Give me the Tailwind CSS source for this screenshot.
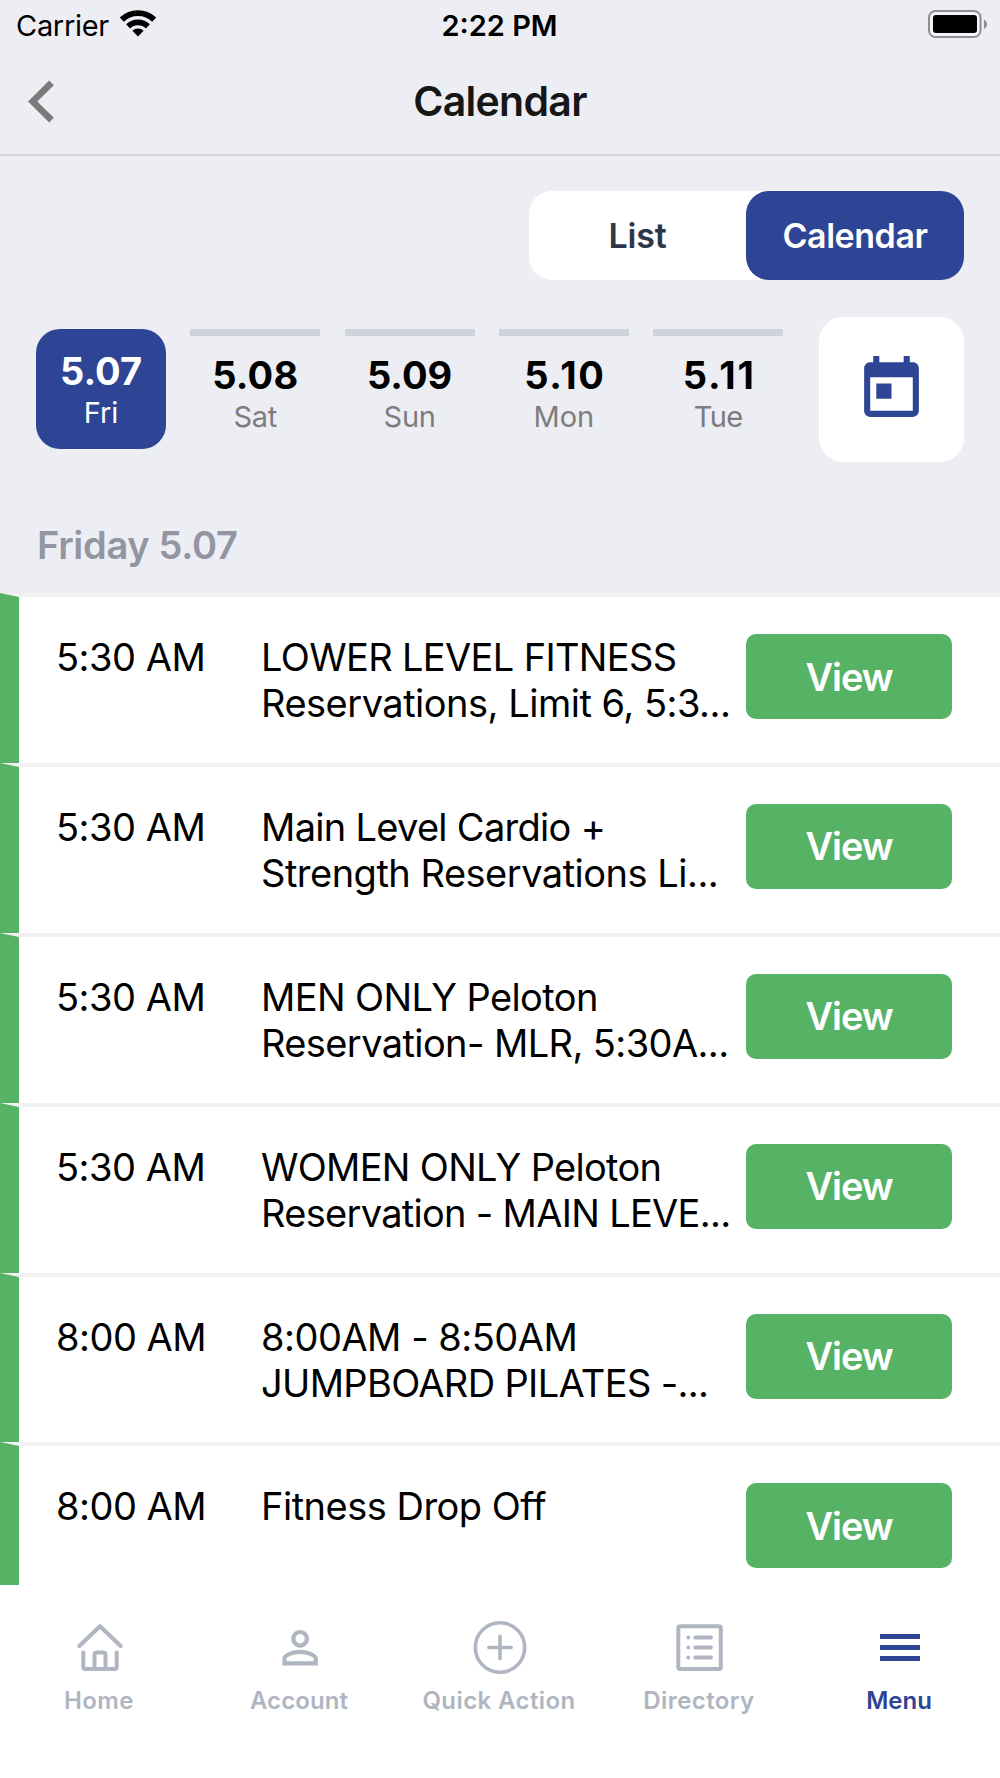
<!DOCTYPE html>
<html lang="en">

<head>
  <meta charset="UTF-8" />
  <meta name="viewport" content="width=device-width, initial-scale=1.0" />
  <title>Calendar</title>
  <script src="https://cdn.jsdelivr.net/npm/@tailwindcss/browser@4"></script>
</head>

<body class="h-[1778px] w-[1000px] overflow-hidden flex flex-col bg-[#edeef3] font-['Inter',sans-serif] text-black">

  <!-- Header -->
  <header class="h-[156px] shrink-0 border-b-2 border-[#d3d4d8]">
    <div class="grid grid-cols-3 items-center h-[51px] pl-4 pr-[13px] text-[29px]">
      <div class="flex items-center gap-[11px]">
        <span class="tracking-[-0.3px]">Carrier</span>
        <svg class="w-9 h-[27px] -mt-1" viewBox="0 0 36 27" fill="none" stroke="#000">
          <path d="M1.8 9.7A23.3 23.3 0 0 1 34.2 9.7" stroke-width="5.9" />
          <path d="M8.1 16.3A14.2 14.2 0 0 1 27.9 16.3" stroke-width="5.8" />
          <path d="M18 26.5L12.4 20.7A8 8 0 0 1 23.6 20.7Z" fill="#000" stroke="none" />
        </svg>
      </div>
      <span class="text-center font-semibold pr-1">2:22 PM</span>
      <svg class="w-[59px] h-7 justify-self-end -mt-[3px]" viewBox="0 0 59 28">
        <rect x="1" y="1" width="51.5" height="26" rx="6.5" fill="#f4f4f7" stroke="#8f8f92" stroke-width="2" />
        <rect x="5" y="5" width="44" height="18" rx="3" />
        <path d="M56 9.5c4 2 4 7.5 0 9.5z" fill="#8f8f92" />
      </svg>
    </div>
    <div class="grid grid-cols-3 items-center h-[101px] px-7">
      <svg class="w-[27px] h-[43px]" viewBox="0 0 27 43" fill="none" stroke="#7a7a7a" stroke-width="6.6">
        <path d="M23.500 2.800L4.700 21.500L23.500 40.200" />
      </svg>
      <h1 class="text-center text-[41px] leading-[50px] font-semibold tracking-[-0.7px] text-[#161616] pb-px">Calendar</h1>
    </div>
  </header>

  <!-- List / Calendar toggle -->
  <div class="flex shrink-0 justify-end pt-[35px] pr-9">
    <div class="flex w-[435px] h-[89px] rounded-[23px] bg-white text-[34px] font-semibold">
      <button class="flex-1 text-[#2d3748] tracking-[-0.2px]">List</button>
      <button class="w-[218px] rounded-[23px] bg-[#2e4494] text-white tracking-[-0.45px]">Calendar</button>
    </div>
  </div>

  <!-- Days -->
  <div class="flex shrink-0 items-center justify-between mt-[37px] px-9 h-[145px]">
    <div class="flex gap-[24.3px] h-[121px] text-center text-[29px] leading-[37px] text-[#7d7d7d]">
      <div class="w-[130px] h-[120px] pt-[19px] rounded-3xl bg-[#2e4494] text-white">
        <p class="text-[38px] leading-[46px] font-bold">5.07</p>
        <p>Fri</p>
      </div>
      <div class="w-[130px] border-t-7 border-[#cfd4dc] pt-4">
        <p class="text-[38px] leading-[46px] font-bold text-black tracking-[0.2px]">5.08</p>
        <p class="tracking-[-0.3px]">Sat</p>
      </div>
      <div class="w-[130px] border-t-7 border-[#cfd4dc] pt-4">
        <p class="text-[38px] leading-[46px] font-bold text-black">5.09</p>
        <p class="tracking-[-0.3px]">Sun</p>
      </div>
      <div class="w-[130px] border-t-7 border-[#cfd4dc] pt-4">
        <p class="text-[38px] leading-[46px] font-bold text-black tracking-[1.6px] pl-0.5">5.10</p>
        <p>Mon</p>
      </div>
      <div class="w-[130px] border-t-7 border-[#cfd4dc] pt-4">
        <p class="text-[38px] leading-[46px] font-bold text-black tracking-[1.9px] pl-0.5">5.11</p>
        <p class="tracking-[-0.6px]">Tue</p>
      </div>
    </div>
    <button class="flex items-center justify-center size-[145px] rounded-3xl bg-white">
      <svg class="size-[73px]" viewBox="0 0 24 24" fill="#2e4494">
        <path d="M19 3h-1V1h-2v2H8V1H6v2H5c-1.11 0-1.99.9-1.99 2L3 19c0 1.1.89 2 2 2h14c1.1 0 2-.9 2-2V5c0-1.1-.9-2-2-2zm0 16H5V8h14v11zM7 10h5v5H7z" />
      </svg>
    </button>
  </div>

  <h2 class="shrink-0 mt-[60px] mb-[25px] pl-[37px] text-[38px] leading-[46px] font-semibold tracking-[-0.3px] text-[#9395a3]">Friday 5.07</h2>

  <!-- Events -->
  <main class="h-[992px] shrink-0 overflow-hidden bg-white text-[38px] leading-[46px] tracking-[-0.5px]">
    <div class="flex items-start h-[169.9px] border-l-19 border-l-[#56b265] border-t-4 border-t-[#f1f1f1] pt-[37px] pr-12">
      <p class="w-[204px] pl-[37px]">5:30 AM</p>
      <p class="flex-1 pl-[38px] whitespace-nowrap"><span class="tracking-[-0.65px]">LOWER LEVEL FITNESS</span><br>Reservations, Limit 6, 5:3...</p>
      <button class="w-[206px] h-[85px] rounded-[10px] bg-[#56b265] text-white text-[38px] font-semibold tracking-[-1.1px]">View</button>
    </div>
    <div class="flex items-start h-[169.9px] border-l-19 border-l-[#56b265] border-t-4 border-t-[#f1f1f1] pt-[37px] pr-12">
      <p class="w-[204px] pl-[37px]">5:30 AM</p>
      <p class="flex-1 pl-[38px] whitespace-nowrap"><span class="tracking-[-0.7px]">Main Level Cardio +</span><br>Strength Reservations Li...</p>
      <button class="w-[206px] h-[85px] rounded-[10px] bg-[#56b265] text-white text-[38px] font-semibold tracking-[-1.1px]">View</button>
    </div>
    <div class="flex items-start h-[169.9px] border-l-19 border-l-[#56b265] border-t-4 border-t-[#f1f1f1] pt-[37px] pr-12">
      <p class="w-[204px] pl-[37px]">5:30 AM</p>
      <p class="flex-1 pl-[38px] whitespace-nowrap tracking-[-0.6px]">MEN ONLY Peloton<br>Reservation- MLR, 5:30A...</p>
      <button class="w-[206px] h-[85px] rounded-[10px] bg-[#56b265] text-white text-[38px] font-semibold tracking-[-1.1px]">View</button>
    </div>
    <div class="flex items-start h-[169.9px] border-l-19 border-l-[#56b265] border-t-4 border-t-[#f1f1f1] pt-[37px] pr-12">
      <p class="w-[204px] pl-[37px]">5:30 AM</p>
      <p class="flex-1 pl-[38px] whitespace-nowrap tracking-[-0.7px]">WOMEN ONLY Peloton<br>Reservation - MAIN LEVE...</p>
      <button class="w-[206px] h-[85px] rounded-[10px] bg-[#56b265] text-white text-[38px] font-semibold tracking-[-1.1px]">View</button>
    </div>
    <div class="flex items-start h-[169.9px] border-l-19 border-l-[#56b265] border-t-4 border-t-[#f1f1f1] pt-[37px] pr-12">
      <p class="w-[204px] pl-[37px]">8:00 AM</p>
      <p class="flex-1 pl-[38px] whitespace-nowrap">8:00AM - 8:50AM<br><span class="tracking-[-0.65px]">JUMPBOARD PILATES -...</span></p>
      <button class="w-[206px] h-[85px] rounded-[10px] bg-[#56b265] text-white text-[38px] font-semibold tracking-[-1.1px]">View</button>
    </div>
    <div class="flex items-start h-[169.9px] border-l-19 border-l-[#56b265] border-t-4 border-t-[#f1f1f1] pt-[37px] pr-12">
      <p class="w-[204px] pl-[37px]">8:00 AM</p>
      <p class="flex-1 pl-[38px] whitespace-nowrap">Fitness Drop Off</p>
      <button class="w-[206px] h-[85px] rounded-[10px] bg-[#56b265] text-white text-[38px] font-semibold tracking-[-1.1px]">View</button>
    </div>
  </main>

  <!-- Bottom navigation -->
  <nav class="grid grid-cols-5 flex-1 bg-white pt-[35px] text-2xl leading-[30px] font-semibold text-[#b0b6c1]">
    <a class="flex flex-col items-center gap-2.5">
      <svg class="size-14" viewBox="0 0 56 56" fill="none" stroke="currentColor" stroke-width="4" stroke-linecap="round" stroke-linejoin="round">
        <path d="M7.3 26L28 6.200L48.7 26" />
        <path d="M11.3 32.5v14.500q0 2 2 2h29.400q2 0 2-2V32.500" />
        <path d="M22.500 48.500V34.500q0-2 2-2h7q2 0 2 2v14" />
      </svg>
      <span class="tracking-[0.4px] pr-0.5">Home</span>
    </a>
    <a class="flex flex-col items-center gap-2.5">
      <svg class="size-14" viewBox="0 0 56 56" fill="currentColor">
        <path transform="translate(1.5 1) scale(2.22)" d="M12 5.9a2.1 2.1 0 1 1 0 4.200 2.1 2.1 0 0 1 0-4.200m0 9c2.970 0 6.100 1.460 6.100 2.100v1.100H5.900V17c0-.640 3.130-2.100 6.100-2.100M12 4C9.790 4 8 5.790 8 8s1.790 4 4 4 4-1.790 4-4-1.790-4-4-4zm0 9c-2.670 0-8 1.340-8 4v3h16v-3c0-2.660-5.330-4-8-4z" />
      </svg>
      <span class="tracking-[0.1px] pr-0.5">Account</span>
    </a>
    <a class="flex flex-col items-center gap-2.5">
      <svg class="size-14" viewBox="0 0 56 56" fill="none" stroke="currentColor" stroke-width="3.6" stroke-linecap="round">
        <circle cx="28" cy="27.5" r="24.7" />
        <path d="M16.8 27.5h22.400M28 16.300V38.700" />
      </svg>
      <span class="tracking-[0.4px] pr-0.5">Quick Action</span>
    </a>
    <a class="flex flex-col items-center gap-2.5">
      <svg class="size-14" viewBox="0 0 56 56" fill="none" stroke="currentColor" stroke-width="4" stroke-linecap="round">
        <rect x="6.3" y="6.2" width="42.5" height="42.7" rx="2" />
        <path d="M23.200 17.500h15.800M23.200 27.500h15.800M23.200 37.500h15.800M16.300 17.500h.010M16.300 27.500h.010M16.300 37.500h.010" stroke-width="3.8" />
      </svg>
      <span class="tracking-[0.4px] pr-0.5">Directory</span>
    </a>
    <a class="flex flex-col items-center gap-2.5 text-[#2e4494]">
      <svg class="size-14" viewBox="0 0 56 56" stroke="currentColor" stroke-width="5">
        <path d="M8 16.500h40M8 27.500h40M8 38.500h40" />
      </svg>
      <span class="pr-0.5">Menu</span>
    </a>
  </nav>

</body>

</html>
